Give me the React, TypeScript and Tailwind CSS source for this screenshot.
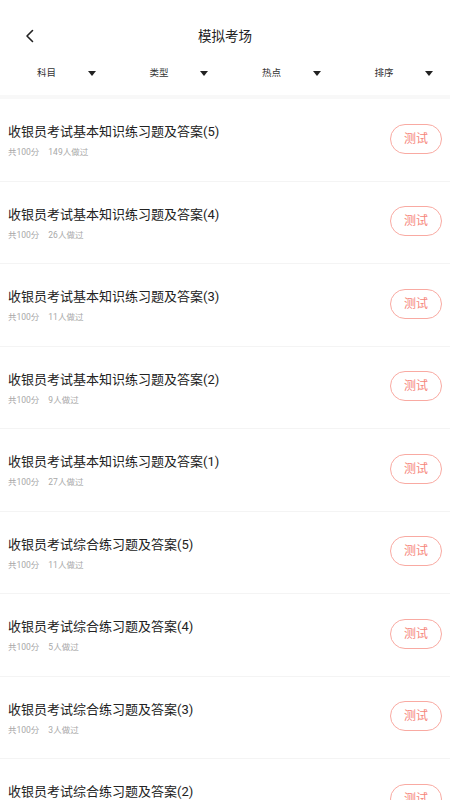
import React from 'react';

interface Exam {
  title: string;
  count: number;
}

const exams: Exam[] = [
  { title: '收银员考试基本知识练习题及答案(5)', count: 149 },
  { title: '收银员考试基本知识练习题及答案(4)', count: 26 },
  { title: '收银员考试基本知识练习题及答案(3)', count: 11 },
  { title: '收银员考试基本知识练习题及答案(2)', count: 9 },
  { title: '收银员考试基本知识练习题及答案(1)', count: 27 },
  { title: '收银员考试综合练习题及答案(5)', count: 11 },
  { title: '收银员考试综合练习题及答案(4)', count: 5 },
  { title: '收银员考试综合练习题及答案(3)', count: 3 },
  { title: '收银员考试综合练习题及答案(2)', count: 8 },
];

const filters = ['科目', '类型', '热点', '排序'];

export default function App() {
  return (
    <div
      className="w-[450px] h-[800px] overflow-hidden bg-white"
      style={{ fontFamily: '"Roboto", "Noto Sans CJK SC", sans-serif' }}
    >
      {/* 标题栏 */}
      <div className="h-[52px] pt-[20px]">
        <div className="h-[32px] flex items-center relative">
          <svg
            className="absolute left-[25px] top-[9px]"
            width="10"
            height="14"
            viewBox="0 0 10 14"
            fill="none"
          >
            <path d="M7.5 1.5 L2 7 L7.5 12.5" stroke="#222" strokeWidth="1.6" strokeLinecap="round" strokeLinejoin="round" />
          </svg>
          <h1 className="w-full text-center text-[13.5px] text-[#222] font-normal">模拟考场</h1>
        </div>
      </div>

      {/* 筛选 */}
      <div className="h-[43px] grid grid-cols-4">
        {filters.map((f) => (
          <div key={f} className="flex items-center pl-[37px] pr-[17px]">
            <span className="text-[9.5px] text-[#333]">{f}</span>
            <svg className="ml-auto" width="8" height="5" viewBox="0 0 8 5">
              <path d="M0 0 H8 L4 5 Z" fill="#222" />
            </svg>
          </div>
        ))}
      </div>
      <div className="h-[4px] bg-[#f8f8f8]" />

      {/* 列表 */}
      <div>
        {exams.map((e, i) => (
          <div
            key={i}
            className="h-[82.5px] flex items-center border-b border-[#f4f4f4] pl-[8px] pr-[8px]"
          >
            <div className="flex-1 pb-[1px]">
              <p className="pt-[3px] text-[13px] leading-[18px] text-[#222]">{e.title}</p>
              <p className="mt-[5px] text-[8.5px] leading-[12px] text-[#a8a8a8]">
                <span>共100分</span>
                <span className="ml-[9px]">{e.count}人做过</span>
              </p>
            </div>
            <button className="w-[52px] h-[30px] rounded-full border border-[#f9aaa2] text-[12px] font-normal text-[#f6857a] mb-[2px]">
              测试
            </button>
          </div>
        ))}
      </div>
    </div>
  );
}
